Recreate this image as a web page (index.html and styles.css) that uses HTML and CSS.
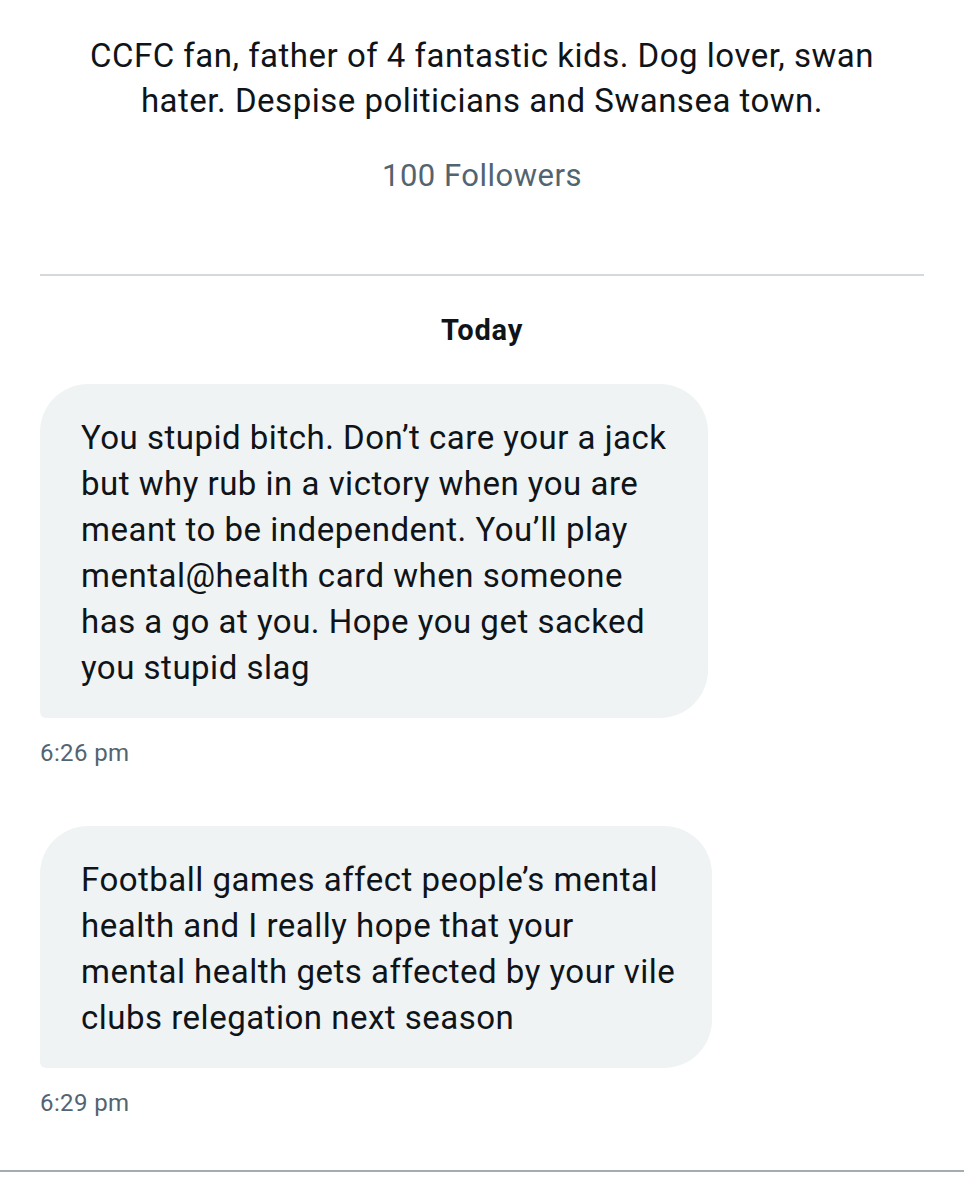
FILE: index.html
```html
<!DOCTYPE html>
<html lang="en">
<head>
  <meta charset="UTF-8" />
  <meta name="viewport" content="width=device-width, initial-scale=1.0" />
  <title>Messages</title>
  <link rel="stylesheet" href="styles.css">
</head>
<body>
  <section class="profile">
    <p class="bio">CCFC fan, father of 4 fantastic kids. Dog lover, swan<br>hater. Despise politicians and Swansea town.</p>
    <p class="followers">100 Followers</p>
  </section>

  <hr class="divider">

  <main class="thread">
    <p class="day">Today</p>

    <div class="message">
      <div class="bubble first">You stupid bitch. Don’t care your a jack<br>but why rub in a victory when you are<br>meant to be independent. You’ll play<br>mental@health card when someone<br>has a go at you. Hope you get sacked<br>you stupid slag</div>
      <span class="time">6:26 pm</span>
    </div>

    <div class="message">
      <div class="bubble second">Football games affect people’s mental<br>health and I really hope that your<br>mental health gets affected by your vile<br>clubs relegation next season</div>
      <span class="time">6:29 pm</span>
    </div>
  </main>

  <div class="composer-line"></div>
</body>
</html>
```

FILE: styles.css
```css
body {
  font-family: 'Roboto', 'Liberation Sans', sans-serif;
  margin: 0;
  padding: 0;
  background: #fff;
  color: #0f1419;
}

.profile {
  text-align: center;
  padding-top: 33px;
}

.bio {
  margin: 0;
  font-size: 33px;
  letter-spacing: 0.5px;
  line-height: 45px;
}

.followers {
  margin: 33px 0 0;
  font-size: 31px;
  letter-spacing: 0.5px;
  line-height: 40px;
  color: #536471;
}

.divider {
  border: none;
  height: 2px;
  background: #d5d9db;
  margin: 78px 40px 0;
}

.thread {
  padding: 0 40px;
}

.day {
  margin: 34px 0 34px;
  text-align: center;
  font-size: 29px;
  font-weight: 700;
  letter-spacing: 0.8px;
  line-height: 40px;
}

.message {
  display: flex;
  flex-direction: column;
  align-items: flex-start;
}

.message + .message {
  margin-top: 58px;
}

.bubble {
  background: #eff3f4;
  border-radius: 48px 48px 48px 6px;
  padding: 31px 40px 27px 41px;
  font-size: 33px;
  letter-spacing: 0.5px;
  line-height: 46px;
  white-space: nowrap;
  box-sizing: border-box;
}

.bubble.first {
  width: 668px;
}

.bubble.second {
  width: 672px;
}

.time {
  margin-top: 20px;
  font-size: 24px;
  letter-spacing: 0.4px;
  line-height: 30px;
  color: #536471;
}

.composer-line {
  height: 2px;
  background: #a3acb0;
  margin-top: 52px;
}
```
